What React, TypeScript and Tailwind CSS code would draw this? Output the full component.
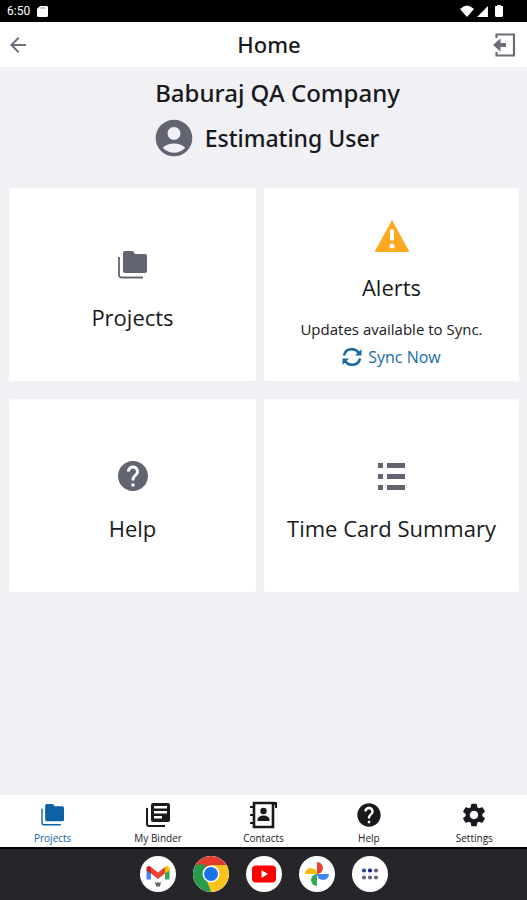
import type { ReactNode } from "react";
import {
  MdAccountCircle,
  MdArrowBack,
  MdHelp,
  MdSettings,
  MdSignalCellular4Bar,
} from "react-icons/md";

interface IconProps {
  className?: string;
}

function FoldersIcon({ className }: IconProps) {
  return (
    <svg viewBox="0 0 30 28" className={className} fill="currentColor" aria-hidden="true">
      <path d="M7 0h8l2 3h10a2 2 0 0 1 2 2v15a2 2 0 0 1-2 2H7a2 2 0 0 1-2-2V2a2 2 0 0 1 2-2z" />
      <path d="M1 6v18a2.500 2.500 0 0 0 2.500 2.500H25" fill="none" stroke="currentColor" strokeWidth="1.800" />
    </svg>
  );
}

function ExitIcon({ className }: IconProps) {
  return (
    <svg viewBox="0 0 24 24" className={className} aria-hidden="true">
      <path
        d="M4.500 5V1.500H22v21H4.500V19"
        fill="none"
        stroke="currentColor"
        strokeWidth="2.200"
      />
      <path d="M1 12l7.500-6.500V10H14v4H8.500v4.500z" fill="currentColor" />
    </svg>
  );
}

function WarningIcon({ className }: IconProps) {
  return (
    <svg viewBox="0 0 36 32" className={className} aria-hidden="true">
      <path d="M18 0l17.500 32H0.500z" fill="currentColor" />
      <path d="M16 9.500h4v11h-4z" fill="#fff" />
      <circle cx="18" cy="26" r="2.500" fill="#fff" />
    </svg>
  );
}

function ListIcon({ className }: IconProps) {
  return (
    <svg viewBox="0 0 27 27" className={className} fill="currentColor" aria-hidden="true">
      <path d="M0 0h5v5H0zM9 0h18v5H9zM0 11h5v5H0zM9 11h18v5H9zM0 22h5v5H0zM9 22h18v5H9z" />
    </svg>
  );
}

function SyncIcon({ className }: IconProps) {
  return (
    <svg viewBox="0 0 20 18" className={className} aria-hidden="true">
      <path
        d="M2 7.500C3.500 0 13-0.500 16.500 4.500M18 10.500C16.500 18 7 18.500 3.500 13.500"
        fill="none"
        stroke="currentColor"
        strokeWidth="2.600"
      />
      <path d="M19.500 1v6.500H13zM0.500 17v-6.500H7z" fill="currentColor" />
    </svg>
  );
}

function BinderIcon({ className }: IconProps) {
  return (
    <svg viewBox="0 0 24 24" className={className} fill="currentColor" aria-hidden="true">
      <path d="M1 5v16a2 2 0 0 0 2 2h16" fill="none" stroke="currentColor" strokeWidth="2" />
      <path
        fillRule="evenodd"
        d="M7 0h15a2 2 0 0 1 2 2v15a2 2 0 0 1-2 2H7a2 2 0 0 1-2-2V2a2 2 0 0 1 2-2zM8 3v2.500h13V3zM8 8v2.500h13V8zM8 13v2.500h8V13z"
      />
    </svg>
  );
}

function ContactsIcon({ className }: IconProps) {
  return (
    <svg viewBox="0 0 28 28" className={className} aria-hidden="true">
      <path d="M5 2h19v24H5z" fill="none" stroke="currentColor" strokeWidth="2.600" />
      <path d="M1 6h5M1 14h5M1 22h5" stroke="currentColor" strokeWidth="2" />
      <path d="M23 1h5v6h-2V4h-3z" fill="currentColor" />
      <circle cx="14.500" cy="10" r="3.200" fill="currentColor" />
      <path d="M8.500 20v-1c0-3 3-4.500 6-4.500s6 1.500 6 4.500v1z" fill="currentColor" />
    </svg>
  );
}

function GmailIcon() {
  return (
    <svg viewBox="0 0 36 36" className="size-9" aria-hidden="true">
      <path d="M6.500 13v10.500H11V16z" fill="#4285f4" />
      <path d="M25 16v7.500h4.500V13z" fill="#34a853" />
      <path d="M11 11l7 5.500L25 11v6.500L18 23l-7-5.500z" fill="#ea4335" />
      <path d="M25 11c2-1.800 4.500-1 4.500 2v1.500L25 17.500z" fill="#fbbc04" />
      <path d="M11 11c-2-1.800-4.500-1-4.500 2v1.500L11 17.500z" fill="#c5221f" />
      <path d="M15 26l2 1 1-1.500 1 1.500 2-1-1 4.500h-4z" fill="#666" />
    </svg>
  );
}

function ChromeIcon() {
  return (
    <svg viewBox="0 0 36 36" className="size-9" aria-hidden="true">
      <path d="M18 18L2.400 9A18 18 0 0 1 33.600 9z" fill="#e33b2e" />
      <path d="M18 18L33.600 9A18 18 0 0 1 18 36z" fill="#fcc31e" />
      <path d="M18 18V36A18 18 0 0 1 2.400 9z" fill="#269c4b" />
      <path d="M18 9h15.600L26 22.500z" fill="#fcc31e" />
      <path d="M25.800 22.500L18 36l-4-11z" fill="#fcc31e" />
      <path d="M10.200 22.500L2.400 9l10-1z" fill="#269c4b" />
      <circle cx="18" cy="18" r="8.500" fill="#fff" />
      <circle cx="18" cy="18" r="7" fill="#1a73e8" />
    </svg>
  );
}

function YouTubeIcon() {
  return (
    <svg viewBox="0 0 36 36" className="size-9" aria-hidden="true">
      <rect x="6" y="9.500" width="24" height="17" rx="4" fill="#f00" />
      <path d="M15.500 14v8l6.500-4z" fill="#fff" />
    </svg>
  );
}

function PhotosIcon() {
  return (
    <svg viewBox="0 0 36 36" className="size-9" aria-hidden="true">
      <path d="M18 6a6 6 0 0 1 0 12z" fill="#ea4335" />
      <path d="M30 18a6 6 0 0 1-12 0z" fill="#4285f4" />
      <path d="M18 30a6 6 0 0 1 0-12z" fill="#34a853" />
      <path d="M6 18a6 6 0 0 1 12 0z" fill="#fbbc04" />
    </svg>
  );
}

function AppsIcon() {
  return (
    <svg viewBox="0 0 36 36" className="size-9" aria-hidden="true">
      <circle cx="12" cy="14.500" r="2.100" fill="#34459a" />
      <circle cx="18" cy="14.500" r="2.100" fill="#141c8c" />
      <g fill="#6b6580">
        <circle cx="24" cy="14.500" r="2.100" />
        <circle cx="12" cy="21.500" r="2.100" />
        <circle cx="18" cy="21.500" r="2.100" />
        <circle cx="24" cy="21.500" r="2.100" />
      </g>
    </svg>
  );
}

function StatusBar() {
  return (
    <div className="flex h-[22px] items-center justify-between bg-black pl-[7px] pr-6 text-white">
      <div className="flex items-center gap-[7px]">
        <span className="font-[Roboto] text-xs">6:50</span>
        <svg viewBox="0 0 11 11" className="size-[11px]" aria-hidden="true">
          <path d="M3 0h7l1 1v9l-1 1H1l-1-1V3z" fill="currentColor" />
          <path d="M4 1v2M6 1v2M8 1v2" stroke="#999" />
        </svg>
      </div>
      <div className="flex items-center gap-[2px]">
        <svg viewBox="0 0 14 12" className="h-3 w-[14px]" aria-hidden="true">
          <path d="M0 4q7-7 14 0l-7 8z" fill="currentColor" />
        </svg>
        <MdSignalCellular4Bar className="size-[13px]" />
        <svg viewBox="0 0 8 12" className="ml-1 h-3 w-2" aria-hidden="true">
          <path d="M2 0h4v1h2v10l-1 1H1l-1-1V1h2z" fill="currentColor" />
        </svg>
      </div>
    </div>
  );
}

interface TileProps {
  icon: ReactNode;
  title: string;
}

function Tile({ icon, title }: TileProps) {
  return (
    <button
      type="button"
      className="flex h-[193px] flex-col items-center gap-6 rounded-[3px] bg-white pt-[61px]"
    >
      <span className="flex h-8 items-center text-[#626571]">{icon}</span>
      <span className="whitespace-nowrap text-[22px] leading-6">{title}</span>
    </button>
  );
}

function AlertsTile() {
  return (
    <section className="flex h-[193px] flex-col items-center rounded-[3px] bg-white pt-8">
      <WarningIcon className="h-8 w-9 text-[#fda920]" />
      <h2 className="mt-[23px] text-[22px] leading-6">Alerts</h2>
      <p className="mt-5 text-[15px] leading-5">Updates available to Sync.</p>
      <button type="button" className="mt-2 flex items-center gap-[6px] text-[#176aa8]">
        <SyncIcon className="h-[18px] w-5" />
        <span className="text-base leading-5">Sync Now</span>
      </button>
    </section>
  );
}

const tabs = [
  { label: "Projects", icon: <FoldersIcon className="h-[22px] w-6" />, active: true },
  { label: "My Binder", icon: <BinderIcon className="size-6" /> },
  { label: "Contacts", icon: <ContactsIcon className="size-7" /> },
  { label: "Help", icon: <MdHelp className="size-7" /> },
  { label: "Settings", icon: <MdSettings className="size-7" /> },
];

const dockApps = [
  { name: "Gmail", icon: <GmailIcon /> },
  { name: "Chrome", icon: <ChromeIcon /> },
  { name: "YouTube", icon: <YouTubeIcon /> },
  { name: "Photos", icon: <PhotosIcon /> },
  { name: "All apps", icon: <AppsIcon /> },
];

export default function App() {
  return (
    <div className="flex min-h-screen flex-col bg-[#f0f0f5] font-['Open_Sans',sans-serif] text-[#18191c]">
      <StatusBar />
      <header className="flex h-[45px] items-center bg-white pl-[6px] pr-[11px] text-[#6b6e78]">
        <button type="button" aria-label="Back">
          <MdArrowBack className="size-6" />
        </button>
        <h1 className="flex-1 pl-4 text-center font-['Noto_Sans',sans-serif] text-[22px] font-medium text-[#18191c]">
          Home
        </h1>
        <button type="button" aria-label="Log out">
          <ExitIcon className="size-6" />
        </button>
      </header>

      <main className="flex-1">
        <div className="flex flex-col items-center pt-3 pl-7 font-['Noto_Sans',sans-serif] font-medium">
          <h2 className="text-2xl leading-7">Baburaj QA Company</h2>
          <div className="mt-[9px] mr-6 flex items-center gap-[9px]">
            <MdAccountCircle className="size-11 text-[#626571]" />
            <span className="text-[23px] leading-8">Estimating User</span>
          </div>
        </div>
        <div className="mt-7 grid grid-cols-[247fr_255fr] gap-x-2 gap-y-[18px] pl-[9px] pr-2">
          <Tile title="Projects" icon={<FoldersIcon className="h-7 w-[30px]" />} />
          <AlertsTile />
          <Tile title="Help" icon={<MdHelp className="size-9" />} />
          <Tile title="Time Card Summary" icon={<ListIcon className="size-[27px]" />} />
        </div>
      </main>

      <nav className="grid h-[52px] grid-cols-5 bg-white">
        {tabs.map((tab) => (
          <a
            key={tab.label}
            href="#"
            className={`flex flex-col items-center pt-[6px] ${tab.active ? "text-[#0d62a5]" : ""}`}
          >
            <span className="flex h-7 items-center">{tab.icon}</span>
            <span className="text-[10px] leading-[18px]">{tab.label}</span>
          </a>
        ))}
      </nav>

      <footer className="flex h-[53px] items-center justify-center gap-[17px] border-t-2 border-black bg-[#25252a] pb-[2px]">
        {dockApps.map((app) => (
          <button
            key={app.name}
            type="button"
            aria-label={app.name}
            className="size-9 overflow-hidden rounded-full bg-white"
          >
            {app.icon}
          </button>
        ))}
      </footer>
    </div>
  );
}
